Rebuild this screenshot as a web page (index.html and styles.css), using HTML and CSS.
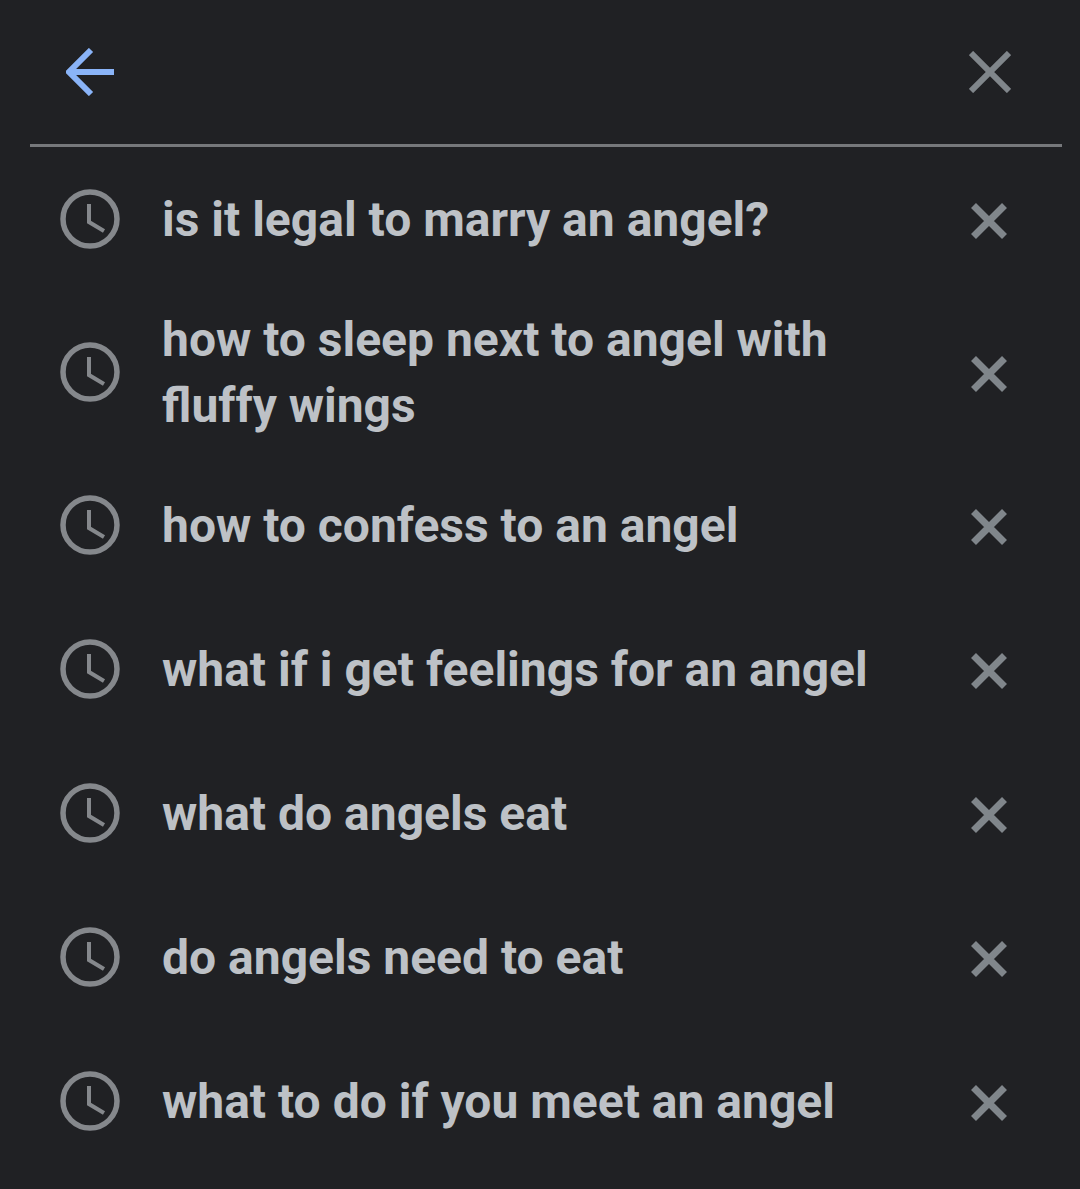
FILE: index.html
```html
<!DOCTYPE html>
<html lang="en">
<head>
<meta charset="utf-8">
<title>Search history</title>
<link rel="stylesheet" href="styles.css">
</head>
<body>
<header class="bar">
<svg class="back" viewBox="0 0 48 48"><path d="M48 24H5M25 2 3 24l22 22" fill="none" stroke="currentColor" stroke-width="6"/></svg>
<svg class="close" viewBox="0 0 42 42"><path d="M2 2l38 38M40 2 2 40" fill="none" stroke="currentColor" stroke-width="6"/></svg>
</header>
<ul class="list">
<li class="row"><svg class="clock" viewBox="0 0 60 60"><circle cx="30" cy="30" r="27" fill="none" stroke="currentColor" stroke-width="5.500"/><path d="M29 15v18l15 9" fill="none" stroke="currentColor" stroke-width="4"/></svg><span class="text">is it legal to marry an angel?</span><svg class="x" viewBox="0 0 36 36"><path d="M2.5 2.5l31 31M33.500 2.500l-31 31" fill="none" stroke="currentColor" stroke-width="7"/></svg></li>
<li class="row tall"><svg class="clock" viewBox="0 0 60 60"><circle cx="30" cy="30" r="27" fill="none" stroke="currentColor" stroke-width="5.500"/><path d="M29 15v18l15 9" fill="none" stroke="currentColor" stroke-width="4"/></svg><span class="text">how to sleep next to angel with fluffy wings</span><svg class="x" viewBox="0 0 36 36"><path d="M2.5 2.5l31 31M33.500 2.500l-31 31" fill="none" stroke="currentColor" stroke-width="7"/></svg></li>
<li class="row"><svg class="clock" viewBox="0 0 60 60"><circle cx="30" cy="30" r="27" fill="none" stroke="currentColor" stroke-width="5.500"/><path d="M29 15v18l15 9" fill="none" stroke="currentColor" stroke-width="4"/></svg><span class="text">how to confess to an angel</span><svg class="x" viewBox="0 0 36 36"><path d="M2.5 2.5l31 31M33.500 2.500l-31 31" fill="none" stroke="currentColor" stroke-width="7"/></svg></li>
<li class="row"><svg class="clock" viewBox="0 0 60 60"><circle cx="30" cy="30" r="27" fill="none" stroke="currentColor" stroke-width="5.500"/><path d="M29 15v18l15 9" fill="none" stroke="currentColor" stroke-width="4"/></svg><span class="text">what if i get feelings for an angel</span><svg class="x" viewBox="0 0 36 36"><path d="M2.5 2.5l31 31M33.500 2.500l-31 31" fill="none" stroke="currentColor" stroke-width="7"/></svg></li>
<li class="row"><svg class="clock" viewBox="0 0 60 60"><circle cx="30" cy="30" r="27" fill="none" stroke="currentColor" stroke-width="5.500"/><path d="M29 15v18l15 9" fill="none" stroke="currentColor" stroke-width="4"/></svg><span class="text">what do angels eat</span><svg class="x" viewBox="0 0 36 36"><path d="M2.5 2.5l31 31M33.500 2.500l-31 31" fill="none" stroke="currentColor" stroke-width="7"/></svg></li>
<li class="row"><svg class="clock" viewBox="0 0 60 60"><circle cx="30" cy="30" r="27" fill="none" stroke="currentColor" stroke-width="5.500"/><path d="M29 15v18l15 9" fill="none" stroke="currentColor" stroke-width="4"/></svg><span class="text">do angels need to eat</span><svg class="x" viewBox="0 0 36 36"><path d="M2.5 2.5l31 31M33.500 2.500l-31 31" fill="none" stroke="currentColor" stroke-width="7"/></svg></li>
<li class="row"><svg class="clock" viewBox="0 0 60 60"><circle cx="30" cy="30" r="27" fill="none" stroke="currentColor" stroke-width="5.500"/><path d="M29 15v18l15 9" fill="none" stroke="currentColor" stroke-width="4"/></svg><span class="text">what to do if you meet an angel</span><svg class="x" viewBox="0 0 36 36"><path d="M2.5 2.5l31 31M33.500 2.500l-31 31" fill="none" stroke="currentColor" stroke-width="7"/></svg></li>
</ul>
</body>
</html>
```
FILE: styles.css
```css
html, body { margin: 0; padding: 0; }
body { width: 1080px; height: 1189px; overflow: hidden; background: #202124; font-family: Roboto, sans-serif; }
.bar { margin: 0 18px 0 30px; height: 144px; border-bottom: 3px solid #76787b; display: flex; align-items: center; justify-content: space-between; padding: 0 51px 0 36px; }
.back { width: 48px; height: 48px; color: #8ab4f8; }
.close { width: 42px; height: 42px; color: #80868b; }
.list { list-style: none; margin: 0; padding: 1px 0 0; }
.row { display: flex; align-items: center; height: 144px; padding: 0 73px 0 60px; color: #bdc1c6; }
.tall { height: 162px; }
.clock { width: 60px; height: 60px; flex: none; margin-bottom: 2px; color: #85888c; filter: blur(0.7px); }
.text { flex: 1; margin-left: 42px; font-size: 48px; line-height: 66px; font-weight: 700; padding-right: 100px; }
.x { width: 36px; height: 36px; flex: none; margin-top: 2px; color: #80868b; }
```
